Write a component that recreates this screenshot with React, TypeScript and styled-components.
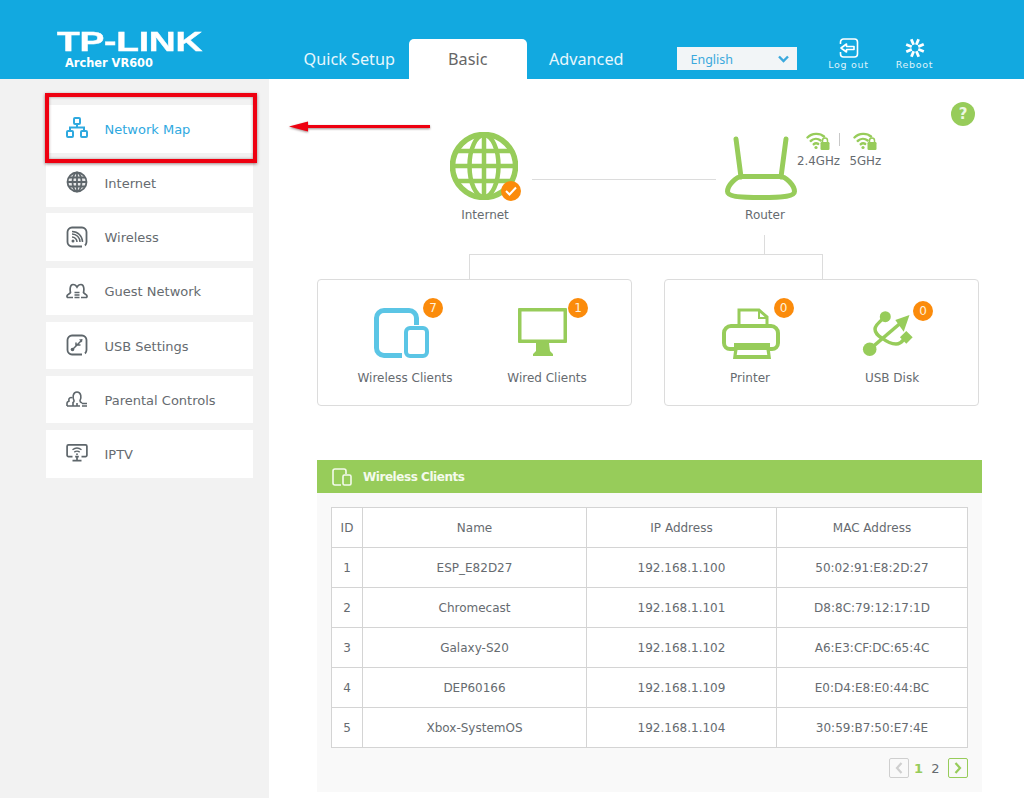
import React from "react";
import styled, { createGlobalStyle } from "styled-components";

const GREEN = "#97cc5a";
const BLUE = "#12a9e0";
const TEXT = "#666b70";
const LINE = "#dcdcdc";
const ORANGE = "#fb8b0b";
const DEJAVU = `"DejaVu Sans", Verdana, sans-serif`;

const Global = createGlobalStyle`
  html, body { margin: 0; padding: 0; background: #fff; }
  body { font-family: ${DEJAVU}; color: ${TEXT}; }
  * { box-sizing: border-box; }
`;

const Page = styled.div`
  width: 1024px;
  height: 798px;
  overflow: hidden;
  display: flex;
  flex-direction: column;
`;

const Header = styled.header`
  height: 79px;
  background: ${BLUE};
  display: flex;
  align-items: flex-end;
  flex: none;
`;

const Logo = styled.div`
  width: 290px;
  padding: 0 0 9px 57px;
  color: #fff;
`;

const Brand = styled.div`
  font-family: "Liberation Sans", Arial, sans-serif;
  font-weight: 700;
  font-size: 27px;
  line-height: 21px;
  width: 145px;
  letter-spacing: -0.2px;
  -webkit-text-stroke: 0.4px #fff;
  transform: scaleX(1.38);
  transform-origin: left center;
  white-space: nowrap;
`;

const Model = styled.div`
  font-weight: 700;
  font-size: 11.4px;
  line-height: 14px;
  margin: 3px 0 0 8px;
  white-space: nowrap;
`;

const Tab = styled.div<{ $active?: boolean }>`
  width: 118.5px;
  height: 40px;
  display: flex;
  align-items: center;
  justify-content: center;
  font-family: "Noto Sans", sans-serif;
  font-size: 16.2px;
  border-radius: 5px 5px 0 0;
  color: ${(p) => (p.$active ? "#666" : "#e8f7fd")};
  background: ${(p) => (p.$active ? "#fff" : "transparent")};
`;

const Language = styled.div`
  width: 120px;
  height: 23px;
  margin: 0 19px 9px 31px;
  padding: 1px 8px 0 14px;
  display: flex;
  align-items: center;
  justify-content: space-between;
  background: #f2f5f7;
  color: #3ba9dd;
  font-size: 12.5px;
  font-family: "Noto Sans", sans-serif;
`;

const Tool = styled.div`
  width: 66px;
  height: 33px;
  margin-bottom: 8px;
  display: flex;
  flex-direction: column;
  align-items: center;
  justify-content: space-between;
  color: #dff3fb;
  font-size: 9.5px;
  line-height: 12px;
  letter-spacing: 0.7px;
`;

const Body = styled.div`
  flex: 1;
  display: flex;
  min-height: 0;
`;

const Sidebar = styled.nav`
  width: 269px;
  flex: none;
  background: #f2f2f2;
  padding: 26px 16px 0 46px;
  display: flex;
  flex-direction: column;
  gap: 6.7px;
`;

const NavItem = styled.div<{ $active?: boolean }>`
  position: relative;
  height: 47.5px;
  background: #fff;
  display: flex;
  align-items: center;
  gap: 16.5px;
  padding: 1px 0 0 20px;
  font-size: 13px;
  color: ${(p) => (p.$active ? "#2fa9df" : TEXT)};
  z-index: ${(p) => (p.$active ? 2 : 1)};
`;

const NavGlyph = styled.span`
  width: 22px;
  height: 22px;
  flex: none;
  display: flex;
  align-items: center;
  justify-content: center;
  margin-top: -2px;
`;

const Highlight = styled.span`
  position: absolute;
  top: -12px;
  left: -1px;
  right: -4px;
  bottom: -10px;
  border: 4px solid #ee0010;
  box-shadow: 0 1px 3px rgba(70, 20, 20, 0.55), inset 0 0 3px rgba(70, 20, 20, 0.45);
  pointer-events: none;
`;

const Main = styled.main`
  position: relative;
  flex: 1;
  padding: 0 42px 0 48px;
`;

const Arrow = styled.svg`
  position: absolute;
  left: 19px;
  top: 38px;
  filter: drop-shadow(0 1px 1px rgba(60, 20, 20, 0.5));
`;

const TopRow = styled.div`
  height: 175px;
  display: flex;
  align-items: flex-start;
  padding: 23px 7px 0 121px;
`;

const Node = styled.div<{ $w: number }>`
  width: ${(p) => p.$w}px;
  margin-top: 30px;
  flex: none;
  display: flex;
  flex-direction: column;
  align-items: center;
  font-size: 12px;
  line-height: 14px;
`;

const NodeIcon = styled.div<{ $nudge: number }>`
  position: relative;
  height: 68px;
  margin-bottom: 8px;
  margin-right: ${(p) => p.$nudge}px;
  display: flex;
  align-items: flex-end;
`;

const Link = styled.div`
  width: 184px;
  flex: none;
  height: 1px;
  background: ${LINE};
  margin: 77px 9px 0 0;
`;

const Radios = styled.div`
  display: flex;
  gap: 9.5px;
  margin: 30px 0 0 -8px;
  position: relative;
  flex: none;
  font-size: 11.8px;
  line-height: 14px;
`;

const Radio = styled.div`
  display: flex;
  flex-direction: column;
  align-items: center;
  gap: 4px;
`;

const RadioBar = styled.span`
  position: absolute;
  left: 42px;
  top: 1px;
  width: 1px;
  height: 13px;
  background: #c8c8c8;
`;

const Help = styled.div`
  width: 24px;
  height: 24px;
  margin-left: auto;
  border-radius: 50%;
  background: ${GREEN};
  color: #eef7e3;
  font-size: 15px;
  font-weight: 700;
  display: flex;
  align-items: center;
  justify-content: center;
`;

const Bracket = styled.div`
  position: relative;
  width: 354px;
  height: 25px;
  margin-left: 152px;
  border: 1px solid ${LINE};
  border-bottom: 0;
  &::before {
    content: "";
    position: absolute;
    left: 294px;
    top: -20px;
    width: 1px;
    height: 19px;
    background: ${LINE};
  }
`;

const Cards = styled.div`
  display: flex;
  gap: 32px;
`;

const Card = styled.div<{ $pad: number }>`
  width: 315px;
  height: 127px;
  border: 1px solid ${LINE};
  border-radius: 4px;
  padding: 28px 0 0 ${(p) => p.$pad}px;
  display: flex;
`;

const Tile = styled.div`
  width: 142px;
  display: flex;
  flex-direction: column;
  align-items: center;
  font-size: 12px;
  line-height: 14px;
`;

const TileIcon = styled.div<{ $nudge: number }>`
  position: relative;
  height: 50px;
  margin-bottom: 13px;
  margin-right: ${(p) => p.$nudge}px;
  & > svg { display: block; overflow: visible; }
`;

const Badge = styled.span<{ $left: number; $top: number }>`
  position: absolute;
  left: ${(p) => p.$left}px;
  top: ${(p) => p.$top}px;
  width: 20px;
  height: 20px;
  border-radius: 50%;
  background: ${ORANGE};
  color: #fff2dc;
  font-size: 12px;
  display: flex;
  align-items: center;
  justify-content: center;
`;

const CheckBadge = styled.span`
  position: absolute;
  right: -3px;
  bottom: -1px;
  width: 20px;
  height: 20px;
  border-radius: 50%;
  background: ${ORANGE};
  display: flex;
  align-items: center;
  justify-content: center;
`;

const Panel = styled.section`
  width: 665px;
  margin-top: 54px;
  background: #f9f9f9;
`;

const PanelHead = styled.div`
  height: 33px;
  background: ${GREEN};
  color: #f4faec;
  display: flex;
  align-items: center;
  gap: 11px;
  padding: 1px 0 0 15px;
  font-size: 12px;
  font-weight: 700;
  letter-spacing: -0.45px;
`;

const PanelBody = styled.div`
  padding: 14px;
`;

const Table = styled.table`
  width: 636px;
  table-layout: fixed;
  border-collapse: collapse;
  background: #fff;
  font-size: 12px;
`;

const Cell = styled.td<{ $w?: number }>`
  height: 40px;
  padding: 0;
  text-align: center;
  border: 1px solid #d4d4d4;
  ${(p) => (p.$w ? `width: ${p.$w}px;` : "")}
`;

const HeadCell = styled(Cell).attrs({ as: "th" })`
  font-weight: 400;
`;

const Pager = styled.div`
  margin-top: 10px;
  height: 20px;
  width: 637px;
  display: flex;
  align-items: center;
  justify-content: flex-end;
  font-size: 13px;
`;

const PageNums = styled.div`
  display: flex;
  padding: 0 4px 0 1px;
`;

const PageBtn = styled.div<{ $on?: boolean }>`
  width: 20px;
  height: 20px;
  border: 1px solid ${(p) => (p.$on ? GREEN : "#cfcfcf")};
  border-radius: 2px;
  display: flex;
  align-items: center;
  justify-content: center;
`;

const PageNum = styled.span<{ $on?: boolean }>`
  width: 17px;
  text-align: center;
  color: ${(p) => (p.$on ? GREEN : TEXT)};
  font-weight: ${(p) => (p.$on ? 700 : 400)};
`;

const NAV_COLOR = "#5e666b";

const NetworkIcon = () => (
  <svg width="22" height="22" viewBox="0 0 22 22" fill="none" stroke="#2fa9df" strokeWidth="2">
    <rect x="8" y="1" width="6" height="6" rx="1" />
    <rect x="1" y="14" width="6" height="6" rx="1" />
    <rect x="15" y="14" width="6" height="6" rx="1" />
    <path d="M11 7v3.5M4 14v-3.5h14V14" />
  </svg>
);
const InternetIcon = () => (
  <svg width="22" height="22" viewBox="0 0 22 22" fill="none" stroke={NAV_COLOR} strokeWidth="1.8">
    <circle cx="11" cy="11" r="9.5" fill={NAV_COLOR} fillOpacity=".15" />
    <ellipse cx="11" cy="11" rx="4.5" ry="9.5" />
    <path d="M11 1.5v19M1.5 11h19M3 6.5h16M3 15.5h16" />
  </svg>
);
const WirelessIcon = () => (
  <svg width="22" height="22" viewBox="0 0 22 22" fill="none" stroke={NAV_COLOR} strokeWidth="1.8">
    <path d="M16 20.5H6a4.5 4.5 0 0 1-4.5-4.5V6A4.5 4.5 0 0 1 6 1.5h10A4.5 4.5 0 0 1 20.5 6v10c0 1.5-.5 2.5-1.5 3.5" />
    <circle cx="7" cy="15" r="1.5" fill={NAV_COLOR} stroke="none" />
    <path d="M6 11a5 5 0 0 1 5 5M6 8a8 8 0 0 1 8 8M6 5.5A10.500 10.500 0 0 1 16.500 16" strokeWidth="1.500" />
  </svg>
);
const GuestIcon = () => (
  <svg width="22" height="16" viewBox="0 0 22 16" fill="none" stroke={NAV_COLOR} strokeWidth="1.7">
    <path d="M7 14.500H2.500c-1.500 0-2-1-1-2.500 1-1 2.500-1.500 3-2.500C4 7.500 3.500 1.500 7 1.500c2 0 3.200 1 4 2.500 .8-1.500 2-2.500 4-2.500 3.500 0 3 6 2.500 8 .5 1 2 1.500 3 2.500 1 1.500 .5 2.500-1 2.500H15" />
    <path d="M8.500 9.500h5M8.500 12h5M8.500 14.500h5" strokeWidth="1.400" />
  </svg>
);
const UsbNavIcon = () => (
  <svg width="22" height="22" viewBox="0 0 22 22" fill="none" stroke={NAV_COLOR} strokeWidth="1.8">
    <path d="M16 20.500H6A4.500 4.500 0 0 1 1.500 16V6A4.500 4.500 0 0 1 6 1.500h10A4.500 4.500 0 0 1 20.500 6v10c0 1.500-.5 2.500-1.500 3.500" />
    <circle cx="6.500" cy="15.500" r="1.800" fill={NAV_COLOR} stroke="none" />
    <path d="M7 15L15 7M10 12V8.500M11 11h3.500" strokeWidth="1.500" />
    <path d="M13 5.500l3.500-.5-.5 3.500z" fill={NAV_COLOR} stroke="none" />
  </svg>
);
const ParentalIcon = () => (
  <svg width="22" height="16" viewBox="0 0 22 16" fill="none" stroke={NAV_COLOR} strokeWidth="1.600">
    <path d="M1 15v-3c0-1 1-1.500 2-2 -.5-1.500 .2-3.500 2-3.500 .5 0 1 .2 1.200 .5" />
    <path d="M7 15v-3.500c1-.5 1.200-1 1-1.800C6.500 7 6.500 1 11 1s4.500 6 3 8.700c-.2 .8 0 1.300 2 2.300" />
    <path d="M1 15h13M11 15v-3" />
    <path d="M16 12.500h5M16 15h5" strokeWidth="1.400" />
  </svg>
);
const IptvIcon = () => (
  <svg width="22" height="18" viewBox="0 0 24 20" fill="none" stroke={NAV_COLOR} strokeWidth="1.9">
    <path d="M7 14H2.500a1.500 1.500 0 0 1-1.500-1.500V2.500A1.500 1.500 0 0 1 2.500 1h19A1.500 1.500 0 0 1 23 2.500v10a1.500 1.500 0 0 1-1.500 1.500H17M10 14h4" />
    <path d="M12 14v4M7 18.500h10" />
    <path d="M7 6.500c3-2.500 7-2.500 10 0M9 9c2-1.500 4-1.500 6 0" strokeWidth="1.500" />
    <circle cx="12" cy="11.300" r="1" fill={NAV_COLOR} stroke="none" />
  </svg>
);

const WifiLock = () => (
  <svg width="24" height="18" viewBox="0 0 24 18">
    <g fill="none" stroke={GREEN} strokeWidth="2.400" strokeLinecap="round">
      <path d="M1.500 5.500C6 .8 14 .8 18 4.500" />
      <path d="M4.700 9c3-2.800 7-2.800 10-.5" />
      <path d="M7.700 12.200c1.500-1.200 3-1.200 4.500-.3" />
    </g>
    <circle cx="10" cy="15.500" r="1.600" fill={GREEN} />
    <rect x="14.500" y="10" width="9" height="8" rx="1.200" fill={GREEN} />
    <path d="M16.500 11V8.500a2.500 2.500 0 0 1 5 0V11" fill="none" stroke={GREEN} strokeWidth="1.500" />
  </svg>
);

const RebootIcon = () => (
  <svg width="20" height="20" viewBox="0 0 20 20" stroke="#fff" strokeWidth="2.800">
    {Array.from({ length: 8 }).map((_, i) => (
      <line key={i} x1="10" y1="0.500" x2="10" y2="6.500" transform={`rotate(${i * 45 + 22} 10 10)`} />
    ))}
  </svg>
);

const rows = [
  ["1", "ESP_E82D27", "192.168.1.100", "50:02:91:E8:2D:27"],
  ["2", "Chromecast", "192.168.1.101", "D8:8C:79:12:17:1D"],
  ["3", "Galaxy-S20", "192.168.1.102", "A6:E3:CF:DC:65:4C"],
  ["4", "DEP60166", "192.168.1.109", "E0:D4:E8:E0:44:BC"],
  ["5", "Xbox-SystemOS", "192.168.1.104", "30:59:B7:50:E7:4E"],
];

export default function App() {
  return (
    <Page>
      <Global />
      <Header>
        <Logo>
          <Brand>TP-LINK</Brand>
          <Model>Archer VR600</Model>
        </Logo>
        <Tab>Quick Setup</Tab>
        <Tab $active>Basic</Tab>
        <Tab>Advanced</Tab>
        <Language>
          English
          <svg width="11" height="8" viewBox="0 0 11 8" fill="none" stroke="#3ba9dd" strokeWidth="2.400">
            <path d="M1 1.500l4.500 4.500L10 1.500" />
          </svg>
        </Language>
        <Tool>
          <svg width="20" height="20" viewBox="0 0 20 20" fill="none" stroke="#fff" strokeWidth="1.600">
            <path d="M1.500 6V4a3 3 0 0 1 3-3h11a3 3 0 0 1 3 3v12a3 3 0 0 1-3 3h-11a3 3 0 0 1-3-3v-2" />
            <path d="M2 10l5.500-4v2.500H15v3H7.500V14z" strokeLinejoin="round" />
          </svg>
          Log out
        </Tool>
        <Tool>
          <RebootIcon />
          Reboot
        </Tool>
      </Header>
      <Body>
        <Sidebar>
          <NavItem $active>
            <NavGlyph><NetworkIcon /></NavGlyph>
            Network Map
            <Highlight />
          </NavItem>
          <NavItem><NavGlyph><InternetIcon /></NavGlyph>Internet</NavItem>
          <NavItem><NavGlyph><WirelessIcon /></NavGlyph>Wireless</NavItem>
          <NavItem><NavGlyph><GuestIcon /></NavGlyph>Guest Network</NavItem>
          <NavItem><NavGlyph><UsbNavIcon /></NavGlyph>USB Settings</NavItem>
          <NavItem><NavGlyph><ParentalIcon /></NavGlyph>Parental Controls</NavItem>
          <NavItem><NavGlyph><IptvIcon /></NavGlyph>IPTV</NavItem>
        </Sidebar>
        <Main>
          <Arrow width="144" height="20" viewBox="0 0 144 20">
            <path d="M1 9.500L20 4.500V8H142V11H20V14.500Z" fill="#ee0010" />
          </Arrow>
          <TopRow>
            <Node $w={94}>
              <NodeIcon $nudge={2}>
                <svg width="68" height="68" viewBox="0 0 68 68" fill="none" stroke={GREEN} strokeWidth="4.500">
                  <circle cx="34" cy="34" r="31.500" strokeWidth="5.500" />
                  <ellipse cx="34" cy="34" rx="14.500" ry="31" />
                  <path d="M34 3v62M3 34h62M8 19h52M8 49h52" />
                </svg>
                <CheckBadge>
                  <svg width="12" height="10" viewBox="0 0 12 10" fill="none" stroke="#fff" strokeWidth="2">
                    <path d="M1 5l3.500 3.500L11 1.500" />
                  </svg>
                </CheckBadge>
              </NodeIcon>
              Internet
            </Node>
            <Link />
            <Node $w={80}>
              <NodeIcon $nudge={8}>
                <svg width="72" height="64" viewBox="0 0 72 64" fill="none" stroke={GREEN} strokeWidth="5" strokeLinecap="round">
                  <path d="M11 3l5 38M61 3l-5 38" />
                  <path d="M17 40.500h38c6 0 14.500 9 14.500 15 0 4.500-10 6-33.500 6s-33.500-1.500-33.500-6c0-6 8.500-15 14.500-15z" />
                </svg>
              </NodeIcon>
              Router
            </Node>
            <Radios>
              <Radio><WifiLock />2.4GHz</Radio>
              <RadioBar />
              <Radio><WifiLock />5GHz</Radio>
            </Radios>
            <Help>?</Help>
          </TopRow>
          <Bracket />
          <Cards>
            <Card $pad={16}>
              <Tile>
                <TileIcon $nudge={7}>
                  <svg width="55" height="50" viewBox="0 0 55 50" fill="none" stroke="#5bc5e5">
                    <path d="M28 47.500H10A7.500 7.500 0 0 1 2.500 40V10A7.500 7.500 0 0 1 10 2.500h25A7.500 7.500 0 0 1 42.500 10v7" strokeWidth="5" />
                    <rect x="32" y="20" width="21" height="28" rx="4" strokeWidth="4" />
                  </svg>
                  <Badge $left={49} $top={-10}>7</Badge>
                </TileIcon>
                Wireless Clients
              </Tile>
              <Tile>
                <TileIcon $nudge={9}>
                  <svg width="49" height="50" viewBox="0 0 49 50" fill={GREEN}>
                    <path fillRule="evenodd" d="M1 0h47a1 1 0 0 1 1 1v33a1 1 0 0 1-1 1H1a1 1 0 0 1-1-1V1a1 1 0 0 1 1-1zM3.500 3.500v28h42v-28z" />
                    <path d="M18 35h13l1 8 3 3v2H15v-2l3-3z" />
                  </svg>
                  <Badge $left={50} $top={-10}>1</Badge>
                </TileIcon>
                Wired Clients
              </Tile>
            </Card>
            <Card $pad={14}>
              <Tile>
                <TileIcon $nudge={-1}>
                  <svg width="58" height="51" viewBox="0 0 58 51" fill="none" stroke={GREEN} strokeWidth="4">
                    <path d="M17 17V2h20l8 7v8" strokeWidth="3" />
                    <path d="M37 2v8h8" strokeWidth="2" />
                    <path d="M12 41H8a6 6 0 0 1-6-6V25a7 7 0 0 1 7-7h40a7 7 0 0 1 7 7v10a6 6 0 0 1-6 6h-4" />
                    <path fill={GREEN} stroke="none" fillRule="evenodd" d="M12 35h36v8l1 8H11l1-8zM15.500 42l-.8 5h30.600l-.8-5z" />
                  </svg>
                  <Badge $left={52} $top={-10}>0</Badge>
                </TileIcon>
                Printer
              </Tile>
              <Tile>
                <TileIcon $nudge={10}>
                  <svg width="48" height="50" viewBox="0 0 48 50" fill="none" stroke={GREEN} strokeWidth="3.500">
                    <circle cx="6.700" cy="41.300" r="6.800" fill={GREEN} stroke="none" />
                    <path d="M6.700 41.300L37 15.500" />
                    <path d="M46.500 7L32.300 12l8.400 11.700z" fill={GREEN} stroke="none" />
                    <circle cx="22.300" cy="8.700" r="5.500" fill={GREEN} stroke="none" />
                    <path d="M21 10C16 14 12 18 12 21c0 5 4 7 8 10" />
                    <path d="M19 30c5 4 9 6 14 6 3 0 6-2 8-5" />
                    <rect x="38.800" y="24.800" width="9" height="9" fill={GREEN} stroke="none" transform="rotate(45 43.300 29.300)" />
                  </svg>
                  <Badge $left={50} $top={-7}>0</Badge>
                </TileIcon>
                USB Disk
              </Tile>
            </Card>
          </Cards>
          <Panel>
            <PanelHead>
              <svg width="20" height="18" viewBox="0 0 20 18" fill="none" stroke="#f4faec" strokeWidth="1.600">
                <path d="M9 17H3a2 2 0 0 1-2-2V3a2 2 0 0 1 2-2h9a2 2 0 0 1 2 2v3" />
                <rect x="11" y="7" width="8" height="10" rx="1.500" />
              </svg>
              Wireless Clients
            </PanelHead>
            <PanelBody>
              <Table>
                <thead>
                  <tr>
                    <HeadCell $w={31}>ID</HeadCell>
                    <HeadCell $w={224}>Name</HeadCell>
                    <HeadCell $w={190}>IP Address</HeadCell>
                    <HeadCell $w={191}>MAC Address</HeadCell>
                  </tr>
                </thead>
                <tbody>
                  {rows.map((r) => (
                    <tr key={r[0]}>
                      {r.map((c) => (
                        <Cell key={c}>{c}</Cell>
                      ))}
                    </tr>
                  ))}
                </tbody>
              </Table>
              <Pager>
                <PageBtn>
                  <svg width="8" height="12" viewBox="0 0 8 12" fill="none" stroke="#cfcfcf" strokeWidth="2.200">
                    <path d="M6.500 1L2 6l4.500 5" />
                  </svg>
                </PageBtn>
                <PageNums>
                  <PageNum $on>1</PageNum>
                  <PageNum>2</PageNum>
                </PageNums>
                <PageBtn $on>
                  <svg width="8" height="12" viewBox="0 0 8 12" fill="none" stroke={GREEN} strokeWidth="2.200">
                    <path d="M1.500 1L6 6l-4.500 5" />
                  </svg>
                </PageBtn>
              </Pager>
            </PanelBody>
          </Panel>
        </Main>
      </Body>
    </Page>
  );
}
